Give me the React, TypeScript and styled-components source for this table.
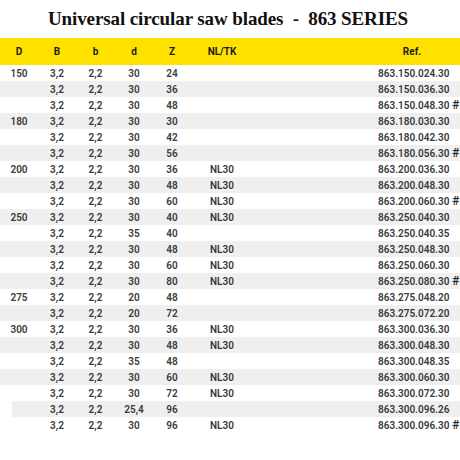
import React from 'react';
import styled, { createGlobalStyle } from 'styled-components';

type Row = {
  D?: string;
  B: string;
  b: string;
  d: string;
  Z: string;
  nl?: string;
  ref: string;
  mark?: boolean;
  inset?: boolean;
};

const rows: Row[] = [
  { D: '150', B: '3,2', b: '2,2', d: '30', Z: '24', ref: '863.150.024.30' },
  { B: '3,2', b: '2,2', d: '30', Z: '36', ref: '863.150.036.30' },
  { B: '3,2', b: '2,2', d: '30', Z: '48', ref: '863.150.048.30', mark: true },
  { D: '180', B: '3,2', b: '2,2', d: '30', Z: '30', ref: '863.180.030.30' },
  { B: '3,2', b: '2,2', d: '30', Z: '42', ref: '863.180.042.30' },
  { B: '3,2', b: '2,2', d: '30', Z: '56', ref: '863.180.056.30', mark: true },
  { D: '200', B: '3,2', b: '2,2', d: '30', Z: '36', nl: 'NL30', ref: '863.200.036.30' },
  { B: '3,2', b: '2,2', d: '30', Z: '48', nl: 'NL30', ref: '863.200.048.30' },
  { B: '3,2', b: '2,2', d: '30', Z: '60', nl: 'NL30', ref: '863.200.060.30', mark: true },
  { D: '250', B: '3,2', b: '2,2', d: '30', Z: '40', nl: 'NL30', ref: '863.250.040.30' },
  { B: '3,2', b: '2,2', d: '35', Z: '40', ref: '863.250.040.35' },
  { B: '3,2', b: '2,2', d: '30', Z: '48', nl: 'NL30', ref: '863.250.048.30' },
  { B: '3,2', b: '2,2', d: '30', Z: '60', nl: 'NL30', ref: '863.250.060.30' },
  { B: '3,2', b: '2,2', d: '30', Z: '80', nl: 'NL30', ref: '863.250.080.30', mark: true },
  { D: '275', B: '3,2', b: '2,2', d: '20', Z: '48', ref: '863.275.048.20' },
  { B: '3,2', b: '2,2', d: '20', Z: '72', ref: '863.275.072.20' },
  { D: '300', B: '3,2', b: '2,2', d: '30', Z: '36', nl: 'NL30', ref: '863.300.036.30' },
  { B: '3,2', b: '2,2', d: '30', Z: '48', nl: 'NL30', ref: '863.300.048.30' },
  { B: '3,2', b: '2,2', d: '35', Z: '48', ref: '863.300.048.35' },
  { B: '3,2', b: '2,2', d: '30', Z: '60', nl: 'NL30', ref: '863.300.060.30' },
  { B: '3,2', b: '2,2', d: '30', Z: '72', nl: 'NL30', ref: '863.300.072.30' },
  { B: '3,2', b: '2,2', d: '25,4', Z: '96', ref: '863.300.096.26', inset: true },
  { B: '3,2', b: '2,2', d: '30', Z: '96', nl: 'NL30', ref: '863.300.096.30', mark: true },
];

const GlobalStyle = createGlobalStyle`
  html, body {
    margin: 0;
    padding: 0;
    background: #ffffff;
  }
  body {
    width: 460px;
    height: 460px;
    overflow: hidden;
  }
`;

export default function App() {
  return (
    <>
      <GlobalStyle />
      <Page>
        <Title>Universal circular saw blades&nbsp; - &nbsp;863 SERIES</Title>
        <HeaderRow>
          <HeadCell>D</HeadCell>
          <HeadCell>B</HeadCell>
          <HeadCell>b</HeadCell>
          <HeadCell>d</HeadCell>
          <HeadCell>Z</HeadCell>
          <HeadCell>NL/TK</HeadCell>
          <HeadCell />
          <HeadCell>Ref.</HeadCell>
          <HeadCell />
        </HeaderRow>
        {rows.map((r, i) => (
          <BodyRow key={r.ref} shaded={i % 2 === 1} inset={r.inset}>
            <Cell>{r.D}</Cell>
            <Cell>{r.B}</Cell>
            <Cell>{r.b}</Cell>
            <Cell>{r.d}</Cell>
            <Cell>{r.Z}</Cell>
            <Cell>{r.nl}</Cell>
            <Cell />
            <Cell>{r.ref}</Cell>
            <Mark>{r.mark ? '#' : ''}</Mark>
          </BodyRow>
        ))}
      </Page>
    </>
  );
}

const columns = '38px 38px 39px 38px 38px 62px 125px 68px 14px';

const Page = styled.div`
  width: 460px;
  height: 460px;
  display: flex;
  flex-direction: column;
  font-family: Roboto, 'Liberation Sans', sans-serif;
`;

const Title = styled.h1`
  margin: 0;
  height: 38px;
  display: flex;
  align-items: center;
  justify-content: center;
  padding: 0 4px 1px 0;
  box-sizing: border-box;
  font-family: 'Liberation Serif', serif;
  font-weight: 700;
  font-size: 19px;
  letter-spacing: -0.1px;
  color: #111111;
  white-space: pre;
`;

const HeaderRow = styled.div`
  display: grid;
  grid-template-columns: ${columns};
  height: 27px;
  align-items: center;
  background: #ffe100;
`;

const HeadCell = styled.div`
  text-align: center;
  font-size: 10px;
  font-weight: 700;
  color: #1c1c1c;
  white-space: nowrap;
`;

const BodyRow = styled.div<{ shaded?: boolean; inset?: boolean }>`
  display: grid;
  grid-template-columns: ${columns};
  height: 16px;
  align-items: center;
  background: ${(p) =>
    p.shaded
      ? p.inset
        ? 'linear-gradient(to right, transparent 12px, #efefef 12px)'
        : '#efefef'
      : '#ffffff'};
`;

const Cell = styled.div`
  text-align: center;
  font-size: 10px;
  font-weight: 600;
  color: #3a3a3a;
  white-space: nowrap;
`;

const Mark = styled.div`
  padding-left: 6px;
  font-size: 12px;
  font-weight: 500;
  color: #222222;
`;
